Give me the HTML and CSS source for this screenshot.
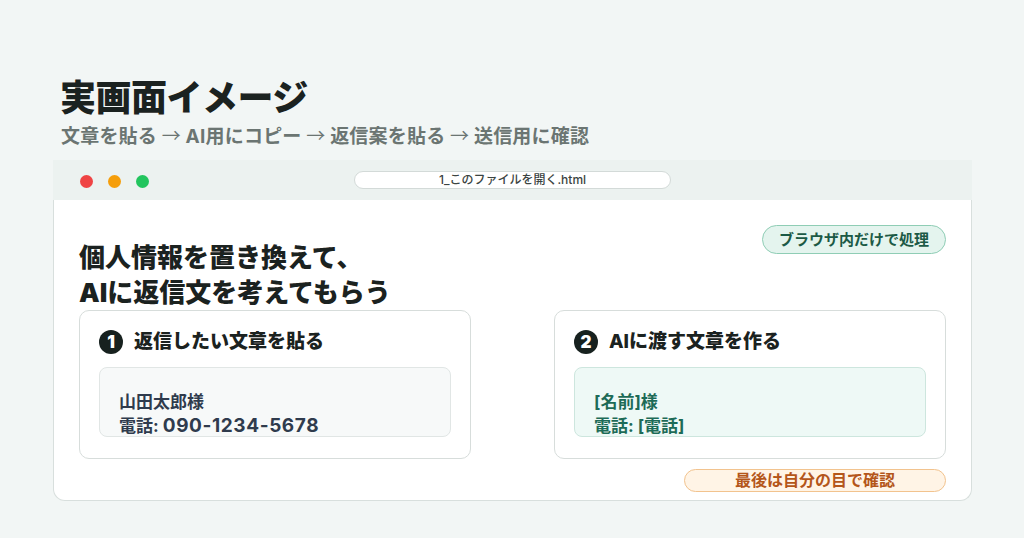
FILE: index.html
```html
<!DOCTYPE html>
<html lang="ja">
<head>
<meta charset="utf-8">
<link rel="stylesheet" href="styles.css">
</head>
<body>
  <div id="page">
    <h1 class="title">実画面イメージ</h1>
    <p class="flow">文章を貼る <span class="arrow">→</span> AI用にコピー <span class="arrow">→</span> 返信案を貼る <span class="arrow">→</span> 送信用に確認</p>

    <div class="window">
      <div class="titlebar">
        <div class="dots">
          <span class="dot red"></span>
          <span class="dot orange"></span>
          <span class="dot green"></span>
        </div>
        <div class="url">1_このファイルを開く.html</div>
        <div></div>
      </div>

      <div class="win-body">
        <div class="top-row">
          <h2 class="lead">個人情報を置き換えて、<br>AIに返信文を考えてもらう</h2>
          <span class="badge badge-green">ブラウザ内だけで処理</span>
        </div>

        <div class="cards">
          <div class="card">
            <div class="step">
              <span class="num">1</span>
              <span class="step-title">返信したい文章を貼る</span>
            </div>
            <div class="textbox">
              山田太郎様<br>
              電話: <span class="digits">090-1234-5678</span>
            </div>
          </div>

          <div class="card">
            <div class="step">
              <span class="num">2</span>
              <span class="step-title">AIに渡す文章を作る</span>
            </div>
            <div class="textbox masked">
              [名前]様<br>
              電話: [電話]
            </div>
          </div>
        </div>

        <div class="bottom-row">
          <span class="badge badge-orange">最後は自分の目で確認</span>
        </div>
      </div>
    </div>
  </div>
</body>
</html>
```

FILE: styles.css
```css
body {
  margin: 0;
  padding: 0;
  background-color: #f2f6f5;
  font-family: Inter, "Noto Sans CJK JP", sans-serif;
  color: #1b2220;
}

#page {
  padding: 77px 52px 0 53px;
}

.title {
  margin: 0 0 0 7px;
  font-size: 36px;
  line-height: 43px;
  font-weight: 900;
  letter-spacing: -0.5px;
  color: #1b2220;
}

.flow {
  margin: 2px 0 0 8px;
  font-size: 19px;
  line-height: 25px;
  font-weight: 700;
  letter-spacing: 0.2px;
  color: #6b7572;
}

.arrow {
  font-family: "Noto Sans CJK JP", sans-serif;
  font-weight: 400;
}

.window {
  margin-top: 11px;
}

.titlebar {
  display: grid;
  grid-template-columns: 1fr auto 1fr;
  align-items: center;
  height: 40px;
  padding: 0 27px;
  background-color: #ecf2f0;
}

.dots {
  display: flex;
  gap: 15px;
  padding-top: 3px;
}

.dot {
  width: 13px;
  height: 13px;
  border-radius: 50%;
}

.red { background-color: #ef4444; }
.orange { background-color: #f59e0b; }
.green { background-color: #22c55e; }

.url {
  width: 315px;
  height: 16px;
  line-height: 16px;
  background-color: white;
  border: 1px solid #d3dad8;
  border-radius: 9px;
  text-align: center;
  font-size: 12px;
  font-weight: 500;
  color: #3b4442;
}

.win-body {
  background-color: white;
  border: 1px solid #d8dfdd;
  border-top: none;
  border-radius: 0 0 12px 12px;
  padding: 25px 25px 8px 25px;
}

.top-row {
  display: flex;
  justify-content: space-between;
  align-items: flex-start;
}

.lead {
  margin: 15px 0 0 0;
  font-size: 26px;
  line-height: 35px;
  font-weight: 900;
  color: #1b2220;
}

.badge {
  display: inline-block;
  border-radius: 999px;
  font-weight: 700;
  text-align: center;
}

.badge-green {
  padding: 0 16px;
  line-height: 27px;
  font-size: 15px;
  background-color: #e4f4ee;
  border: 1px solid #8fcdb5;
  color: #1c5a46;
}

.badge-orange {
  padding: 0 50px;
  line-height: 21px;
  font-size: 16px;
  background-color: #fff4e6;
  border: 1px solid #f2c38e;
  color: #b4561a;
}

.cards {
  display: grid;
  grid-template-columns: 1fr 1fr;
  gap: 83px;
}

.card {
  border: 1px solid #d7dddb;
  border-radius: 10px;
  padding: 19px 19px 21px 19px;
}

.step {
  display: flex;
  align-items: center;
  gap: 11px;
  height: 24px;
}

.num {
  width: 24px;
  height: 24px;
  border-radius: 50%;
  background-color: #17211f;
  color: white;
  font-size: 17px;
  font-weight: 900;
  line-height: 24px;
  text-align: center;
}

.step-title {
  font-size: 19px;
  font-weight: 800;
  line-height: 24px;
  color: #1b2220;
}

.textbox {
  margin-top: 13px;
  height: 46px;
  overflow: hidden;
  padding: 22px 19px 0 19px;
  background-color: #f7f9f9;
  border: 1px solid #e1e6e5;
  border-radius: 8px;
  font-size: 17px;
  line-height: 24px;
  font-weight: 700;
  color: #2f3b4d;
}

.digits {
  font-size: 19px;
  letter-spacing: 0.6px;
}

.textbox.masked {
  background-color: #eef9f6;
  border-color: #cde6de;
  color: #1d6b57;
}

.bottom-row {
  display: flex;
  justify-content: flex-end;
  margin-top: 10px;
}
```
